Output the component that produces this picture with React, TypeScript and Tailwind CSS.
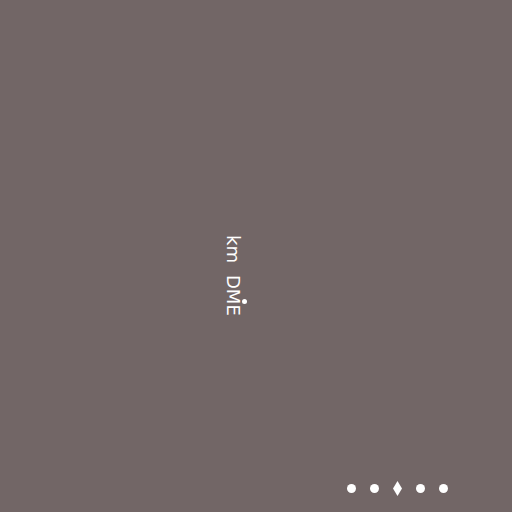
export default function App() {
  const dots = ['dot', 'dot', 'diamond', 'dot', 'dot'];
  return (
    <div className="flex h-[512px] w-[512px] flex-col bg-[#726666] font-['DejaVu_Sans',sans-serif] text-white">
      <div className="flex flex-1 flex-col items-start pl-[224px] pt-[235px]">
        <div className="flex items-center gap-[12px] text-[18px] leading-none [writing-mode:vertical-rl]">
          <span>km</span>
          <span className="relative">
            DME
            <span className="absolute left-[18px] top-[24px] h-[5px] w-[5px] rounded-full bg-white" />
          </span>
        </div>
      </div>
      <div className="flex items-center justify-end gap-[14px] pb-[16px] pr-[64px]">
        {dots.map((d, i) =>
          d === 'diamond' ? (
            <svg key={i} width="9" height="15" viewBox="0 0 9 15">
              <path d="M4.5 0 L9 7.5 L4.5 15 L0 7.5 Z" fill="white" />
            </svg>
          ) : (
            <span key={i} className="h-[9px] w-[9px] rounded-full bg-white" />
          )
        )}
      </div>
    </div>
  );
}
